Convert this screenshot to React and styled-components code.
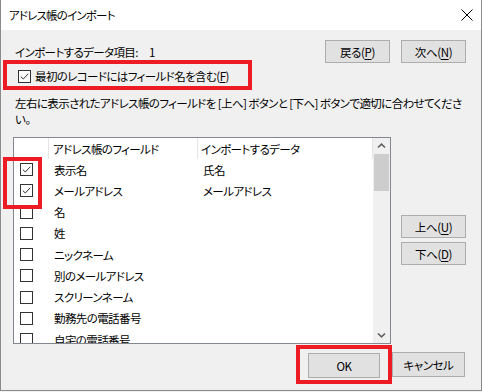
import React from "react";
import styled, { createGlobalStyle } from "styled-components";

const GlobalStyle = createGlobalStyle`
  html, body {
    margin: 0;
    padding: 0;
    background: #f0f0f0;
  }
  body {
    font-family: "Noto Sans CJK JP", "Noto Sans", sans-serif;
    font-size: 11.5px;
    letter-spacing: -0.6px;
    color: #000;
  }
`;

const Window = styled.div`
  width: 482px;
  height: 391px;
  box-sizing: border-box;
  border: 1px solid #8a8a8a;
  border-top: none;
  background: #f0f0f0;
  display: flex;
  flex-direction: column;
  font-feature-settings: "palt";
`;

const TitleBar = styled.div`
  height: 30px;
  flex: none;
  background: #fff;
  display: flex;
  align-items: center;
  justify-content: space-between;
  padding: 0 8px;
`;

const Title = styled.span`
  line-height: 16px;
  letter-spacing: -0.8px;
`;

const Body = styled.div`
  flex: 1;
  display: flex;
  flex-direction: column;
  padding: 10px 15px 0 2px;
`;

const TopSection = styled.div`
  display: flex;
  justify-content: space-between;
  align-items: flex-start;
`;

const LeftStack = styled.div`
  display: flex;
  flex-direction: column;
`;

const Label = styled.div`
  margin: 4px 0 0 12px;
  line-height: 16px;
`;

const Count = styled.span`
  margin-left: 11px;
`;

const Highlight = styled.div`
  border: 4px solid #ed1c24;
  box-sizing: border-box;
  display: flex;
  align-items: center;
  padding: ${p => p.$pad || "0"};
  width: ${p => p.$w || "auto"};
  height: ${p => p.$h || "auto"};
`;

const CheckLabel = styled.label`
  display: flex;
  align-items: center;
  gap: 4px;
  line-height: 16px;
  white-space: nowrap;
`;

const ButtonRow = styled.div`
  display: flex;
  gap: ${p => p.$gap || "11px"};
`;

const Button = styled.button`
  font: inherit;
  letter-spacing: -0.4px;
  color: #000;
  width: ${p => p.$w || "65px"};
  height: ${p => p.$h || "23px"};
  padding: 0;
  background: #e1e1e1;
  border: 1px solid #adadad;
  box-sizing: border-box;
  display: flex;
  align-items: center;
  justify-content: center;
  flex: none;
  u {
    text-decoration-thickness: 1px;
    text-underline-offset: 2px;
  }
`;

const Instructions = styled.p`
  margin: 5px 0 0 12px;
  line-height: 16px;
  white-space: nowrap;
`;

const Middle = styled.div`
  display: flex;
  margin-top: 10px;
`;

const ListBox = styled.div`
  margin-left: 10px;
  width: 378px;
  height: 207px;
  box-sizing: border-box;
  border: 1px solid #828790;
  background: #fff;
  display: flex;
  overflow: hidden;
`;

const ListContent = styled.div`
  flex: 1;
  display: flex;
  flex-direction: column;
  overflow: hidden;
`;

const cols = "35px 149px 175px";

const HeaderRow = styled.div`
  display: grid;
  grid-template-columns: ${cols};
  height: 21px;
  flex: none;
`;

const HeaderCell = styled.div`
  border-right: 1px solid #e5e5e5;
  padding-left: ${p => p.$pl || "4px"};
  display: flex;
  align-items: center;
  white-space: nowrap;
  overflow: hidden;
`;

const Row = styled.div`
  display: grid;
  grid-template-columns: ${cols};
  height: 21.25px;
  flex: none;
  align-items: center;
`;

const Cell = styled.div`
  padding-left: ${p => p.$pl || "5px"};
  display: flex;
  align-items: center;
  white-space: nowrap;
  line-height: 16px;
`;

const Box = styled.span`
  width: 13px;
  height: 13px;
  box-sizing: border-box;
  border: 1px solid #333;
  background: #fff;
  display: inline-flex;
  align-items: center;
  justify-content: center;
  flex: none;
`;

const Scrollbar = styled.div`
  width: 17px;
  flex: none;
  background: #f0f0f0;
  display: flex;
  flex-direction: column;
`;

const ScrollArrow = styled.div`
  height: 16px;
  display: flex;
  align-items: center;
  justify-content: center;
  flex: none;
`;

const Track = styled.div`
  flex: 1;
  display: flex;
  flex-direction: column;
`;

const Thumb = styled.div`
  height: 37px;
  margin: 0 1px;
  background: #cdcdcd;
`;

const SideButtons = styled.div`
  display: flex;
  flex-direction: column;
  gap: 4px;
  margin: 78px 0 0 10px;
`;

const Bottom = styled.div`
  display: flex;
  justify-content: flex-end;
  align-items: center;
  margin: 1px 1px 0 0;
`;

const AnnotatedList = styled.div`
  position: relative;
`;

const Marker = styled.div`
  position: absolute;
  left: 0;
  top: 20px;
  width: 39px;
  height: 52px;
  box-sizing: border-box;
  border: 4px solid #ed1c24;
  pointer-events: none;
`;

const Checkbox = ({ checked }) => (
  <Box>
    {checked && (
      <svg width="11" height="11" viewBox="0 0 11 11">
        <path d="M1.8 5.6 L4.3 8 L9.2 2.8" fill="none" stroke="#333" strokeWidth="1" />
      </svg>
    )}
  </Box>
);

const Chevron = ({ down }) => (
  <svg width="9" height="6" viewBox="0 0 9 6">
    <path
      d={down ? "M1 1.5 L4.5 4.8 L8 1.5" : "M1 4.5 L4.5 1.2 L8 4.5"}
      fill="none"
      stroke="#606060"
      strokeWidth="1.6"
    />
  </svg>
);

const fields = [
  { name: "表示名", data: "氏名", checked: true },
  { name: "メールアドレス", data: "メールアドレス", checked: true },
  { name: "名" },
  { name: "姓" },
  { name: "ニックネーム" },
  { name: "別のメールアドレス" },
  { name: "スクリーンネーム" },
  { name: "勤務先の電話番号" },
  { name: "自宅の電話番号" },
];

export default function App() {
  return (
    <>
      <GlobalStyle />
      <Window>
        <TitleBar>
          <Title>アドレス帳のインポート</Title>
          <svg width="12" height="12" viewBox="0 0 12 12">
            <path d="M0.5 0.5 L11.5 11.5 M11.5 0.5 L0.5 11.5" stroke="#000" strokeWidth="1" />
          </svg>
        </TitleBar>
        <Body>
          <TopSection>
            <LeftStack>
              <Label>
                インポートするデータ項目:<Count>1</Count>
              </Label>
              <Highlight $w="249px" $h="30px" $pad="2px 0 0 11px">
                <CheckLabel>
                  <Checkbox checked />
                  <span>
                    最初のレコードにはフィールド名を含む(<u>F</u>)
                  </span>
                </CheckLabel>
              </Highlight>
            </LeftStack>
            <ButtonRow>
              <Button>
                戻る(<u>P</u>)
              </Button>
              <Button>
                次へ(<u>N</u>)
              </Button>
            </ButtonRow>
          </TopSection>
          <Instructions>
            左右に表示されたアドレス帳のフィールドを [上へ] ボタンと [下へ] ボタンで適切に合わせてくださ
            <br />
            い。
          </Instructions>
          <Middle>
            <AnnotatedList>
              <ListBox>
                <ListContent>
                  <HeaderRow>
                    <HeaderCell />
                    <HeaderCell>アドレス帳のフィールド</HeaderCell>
                    <HeaderCell $pl="3px">インポートするデータ</HeaderCell>
                  </HeaderRow>
                  {fields.map(f => (
                    <Row key={f.name}>
                      <Cell $pl="6px">
                        <Checkbox checked={f.checked} />
                      </Cell>
                      <Cell>{f.name}</Cell>
                      <Cell>{f.data || ""}</Cell>
                    </Row>
                  ))}
                </ListContent>
                <Scrollbar>
                  <ScrollArrow>
                    <Chevron />
                  </ScrollArrow>
                  <Track>
                    <Thumb />
                  </Track>
                  <ScrollArrow>
                    <Chevron down />
                  </ScrollArrow>
                </Scrollbar>
              </ListBox>
              <Marker />
            </AnnotatedList>
            <SideButtons>
              <Button>
                上へ(<u>U</u>)
              </Button>
              <Button>
                下へ(<u>D</u>)
              </Button>
            </SideButtons>
          </Middle>
          <Bottom>
            <Highlight $w="96px" $h="39px" $pad="4px 8px 2px">
              <Button $w="72px" $h="25px">OK</Button>
            </Highlight>
            <Button $w="73px" $h="25px">キャンセル</Button>
          </Bottom>
        </Body>
      </Window>
    </>
  );
}
